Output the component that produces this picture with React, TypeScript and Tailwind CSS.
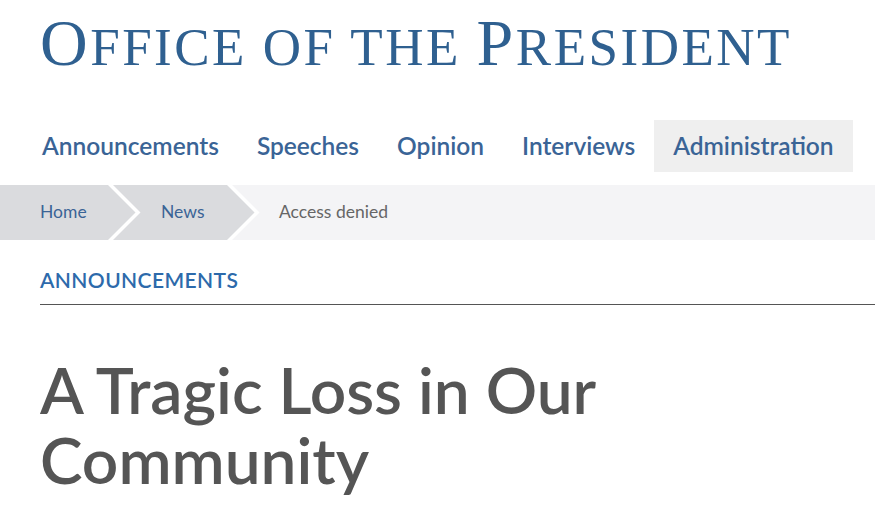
const navItems = ["Announcements", "Speeches", "Opinion", "Interviews", "Administration"]

function Chevron({ next }: { next: string }) {
  return (
    <svg width="33" height="55" viewBox="0 0 33 55" className="block shrink-0">
      <rect x="0" y="0" width="33" height="55" fill={next} />
      <polygon points="0,0 5,0 32.5,27.5 5,55 0,55" fill="#ffffff" />
      <polygon points="0,0 27.5,27.5 0,55" fill="#dadbde" />
    </svg>
  )
}

export default function App() {
  return (
    <div className="h-[516px] w-[875px] overflow-hidden bg-white font-['Lato',sans-serif]">
      <header className="pl-[40px] pt-[12px]">
        <h1 className="whitespace-nowrap font-['Liberation_Serif',serif] leading-[62px] tracking-[2.5px] text-[#2f6090]">
          <span className="text-[66px]">O</span>
          <span className="text-[53px]">FFICE OF THE </span>
          <span className="text-[66px]">P</span>
          <span className="text-[53px]">RESIDENT</span>
        </h1>
      </header>

      <nav className="mt-[29px] flex pl-[23px]">
        {navItems.map((item) => (
          <a
            key={item}
            href="#"
            className={
              "flex h-[52px] items-center px-[19px] text-[24.5px] font-semibold text-[#3a6496] " +
              (item === "Administration" ? "bg-[#efefef]" : "")
            }
          >
            {item}
          </a>
        ))}
      </nav>

      <div className="mt-[13px] flex h-[55px] items-stretch bg-[#f4f4f6] text-[17.5px]">
        <a href="#" className="flex w-[108px] items-center bg-[#dadbde] pl-[40px] text-[#3a6496]">
          Home
        </a>
        <Chevron next="#dadbde" />
        <a href="#" className="flex w-[86px] items-center bg-[#dadbde] pl-[20px] text-[#3a6496]">
          News
        </a>
        <Chevron next="#f4f4f6" />
        <span className="flex items-center pl-[19px] text-[#666666]">Access denied</span>
      </div>

      <section className="pl-[40px]">
        <p className="mt-[26px] text-[21px] font-semibold uppercase leading-[28px] tracking-[0.4px] text-[#2d6aab]">
          Announcements
        </p>
        <hr className="mt-[10px] border-t border-[#555555]" />
        <h2 className="mt-[50px] max-w-[640px] text-[64px] font-semibold leading-[70px] text-[#555555]">
          A Tragic Loss in Our Community
        </h2>
      </section>
    </div>
  )
}
